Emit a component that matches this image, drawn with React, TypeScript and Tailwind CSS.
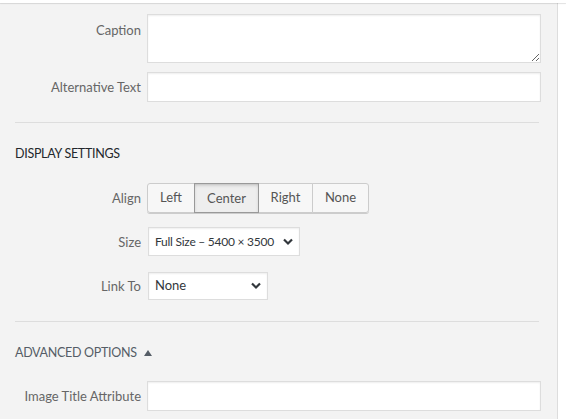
import React from 'react';

const font = { fontFamily: '"Segoe UI", Lato, "Liberation Sans", sans-serif' };

function Chevron() {
  return (
    <svg width="10" height="8" viewBox="0 0 10 8" className="shrink-0">
      <path d="M1 1.5 L5 5.5 L9 1.5" fill="none" stroke="#32373c" strokeWidth="2.2" />
    </svg>
  );
}

function Label({ children, top }: { children: React.ReactNode; top?: boolean }) {
  return (
    <span
      className={`w-[126px] shrink-0 text-right text-[13px] leading-[18px] text-[#666] whitespace-nowrap ${top ? 'pt-[7px]' : ''}`}
    >
      {children}
    </span>
  );
}

function Select({ value, width, small }: { value: string; width: string; small?: boolean }) {
  return (
    <div
      className={`${width} ml-px flex items-center justify-between gap-[3px] bg-white border border-[#ddd] shadow-[inset_0_1px_2px_rgba(0,0,0,0.07)] pl-[6px] pr-[6px] text-[#32373c] whitespace-nowrap`}
    >
      <span className={small ? 'text-[12px] tracking-[-0.25px]' : 'text-[13px]'}>{value}</span>
      <Chevron />
    </div>
  );
}

const aligns = [
  { name: 'Left', w: 'w-[48px]', first: true },
  { name: 'Center', w: 'w-[65px]', active: true },
  { name: 'Right', w: 'w-[55px]' },
  { name: 'None', w: 'w-[57px]', last: true },
];

export default function App() {
  return (
    <div className="w-[566px] h-[419px] overflow-hidden bg-white flex flex-col" style={font}>
      {/* modal header edge */}
      <div className="h-[3px] shrink-0 bg-white shadow-[0_1px_1px_rgba(0,0,0,0.12)] relative z-10" />

      <div className="flex flex-1">
        <div className="w-[558px] shrink-0 bg-[#f3f3f3] border-r border-[#ddd] pl-[15px] pr-[16px] pt-[11px]">
          <div className="flex gap-[6px] items-start">
            <Label top>Caption</Label>
            <textarea className="flex-1 h-[49px] bg-white border border-[#ddd] shadow-[inset_0_1px_2px_rgba(0,0,0,0.07)] outline-none" />
          </div>

          <div className="flex gap-[6px] items-center mt-[9px]">
            <Label>Alternative Text</Label>
            <input className="flex-1 h-[30px] bg-white border border-[#ddd] shadow-[inset_0_1px_2px_rgba(0,0,0,0.07)] outline-none" />
          </div>

          <div className="mt-[20px] mr-[2px] h-px bg-[#ddd]" />

          <h2 className="mt-[22px] text-[12.5px] tracking-[-0.3px] leading-[18px] uppercase text-[#23282d]">
            Display Settings
          </h2>

          <div className="flex gap-[6px] items-center mt-[20px]">
            <Label>Align</Label>
            <div className="flex shadow-[0_1px_0_#ccc] rounded-[3px]">
              {aligns.map((a) => (
                <div
                  key={a.name}
                  className={`${a.w} h-[30px] flex items-center justify-center text-[13px] border ${
                    a.first ? 'rounded-l-[3px]' : '-ml-px'
                  } ${a.last ? 'rounded-r-[3px]' : ''} ${
                    a.active
                      ? 'bg-[#eee] border-[#999] text-[#555] pt-[2px] relative z-10 shadow-[inset_0_2px_5px_-3px_rgba(0,0,0,0.5)]'
                      : 'bg-[#f7f7f7] border-[#ccc] text-[#555]'
                  }`}
                >
                  {a.name}
                </div>
              ))}
            </div>
          </div>

          <div className="flex gap-[6px] items-center mt-[14px]">
            <Label>Size</Label>
            <div className="h-[29px] flex">
              <Select value="Full Size – 5400 × 3500" width="w-[152px]" small />
            </div>
          </div>

          <div className="flex gap-[6px] items-center mt-[16px]">
            <Label>Link To</Label>
            <div className="h-[28px] flex">
              <Select value="None" width="w-[120px]" />
            </div>
          </div>

          <div className="mt-[21px] mr-[2px] h-px bg-[#ddd]" />

          <div className="mt-[22px] flex items-center gap-[7px] text-[12.5px] tracking-[-0.3px] leading-[18px] uppercase text-[#555d66]">
            <span>Advanced Options</span>
            <svg width="8" height="6" viewBox="0 0 8 6">
              <path d="M4 0 L8 6 L0 6 Z" fill="#555d66" />
            </svg>
          </div>

          <div className="flex gap-[6px] items-center mt-[19px]">
            <Label>Image Title Attribute</Label>
            <input className="flex-1 h-[30px] bg-white border border-[#ddd] shadow-[inset_0_1px_2px_rgba(0,0,0,0.07)] outline-none" />
          </div>
        </div>
        <div className="flex-1 bg-white" />
      </div>
    </div>
  );
}
